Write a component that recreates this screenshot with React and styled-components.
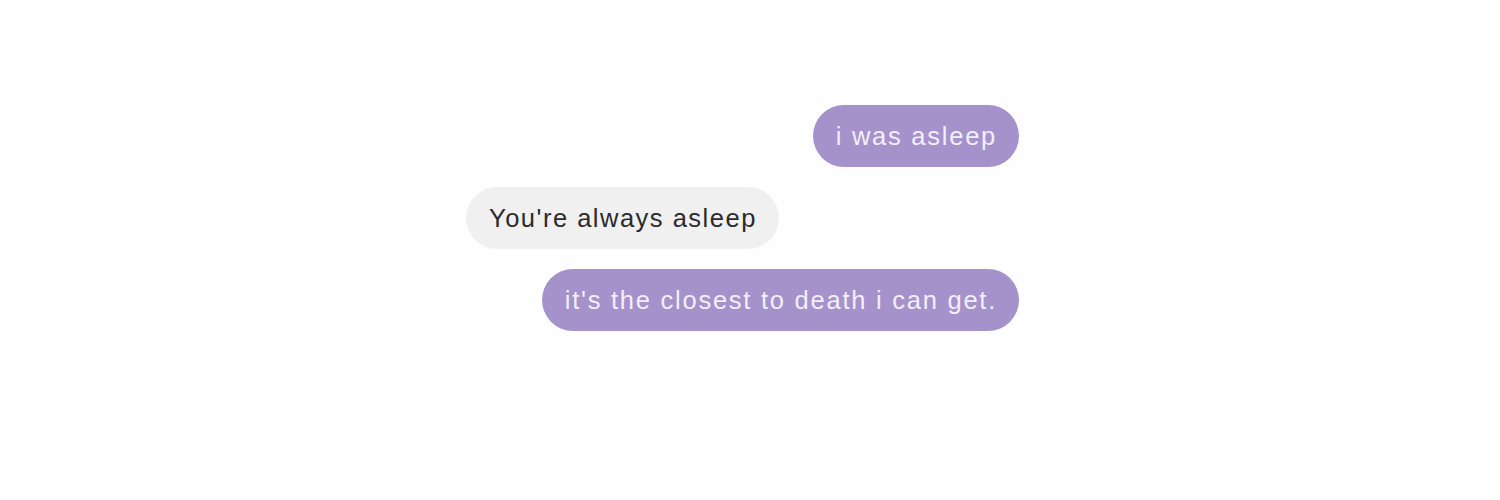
import React from "react";
import styled, { createGlobalStyle, css } from "styled-components";

const GlobalStyle = createGlobalStyle`
  html, body {
    margin: 0;
    padding: 0;
    background: #fefefe;
  }
`;

const Page = styled.div`
  width: 1500px;
  height: 500px;
  padding-top: 105px;
  box-sizing: border-box;
`;

const Thread = styled.div`
  width: 553px;
  margin-left: 466px;
  display: flex;
  flex-direction: column;
  gap: 20px;
`;

const Bubble = styled.div`
  height: 62px;
  padding: 0 22px 0 23px;
  box-sizing: border-box;
  display: flex;
  align-items: center;
  border-radius: 31px;
  font-family: "Liberation Sans", Arial, sans-serif;
  font-size: 25.5px;
  white-space: nowrap;

  ${props =>
    props.mine
      ? css`
          align-self: flex-end;
          background: #a592cb;
          color: #f3eef9;
          letter-spacing: 1.75px;
        `
      : css`
          align-self: flex-start;
          background: #f0f0f0;
          color: #2b2b2b;
          letter-spacing: 1.5px;
        `}
`;

const messages = [
  { text: "i was asleep", mine: true },
  { text: "You're always asleep", mine: false },
  { text: "it's the closest to death i can get.", mine: true },
];

function App() {
  return (
    <>
      <GlobalStyle />
      <Page>
        <Thread>
          {messages.map((m, i) => (
            <Bubble key={i} mine={m.mine}>
              {m.text}
            </Bubble>
          ))}
        </Thread>
      </Page>
    </>
  );
}

export default App;
